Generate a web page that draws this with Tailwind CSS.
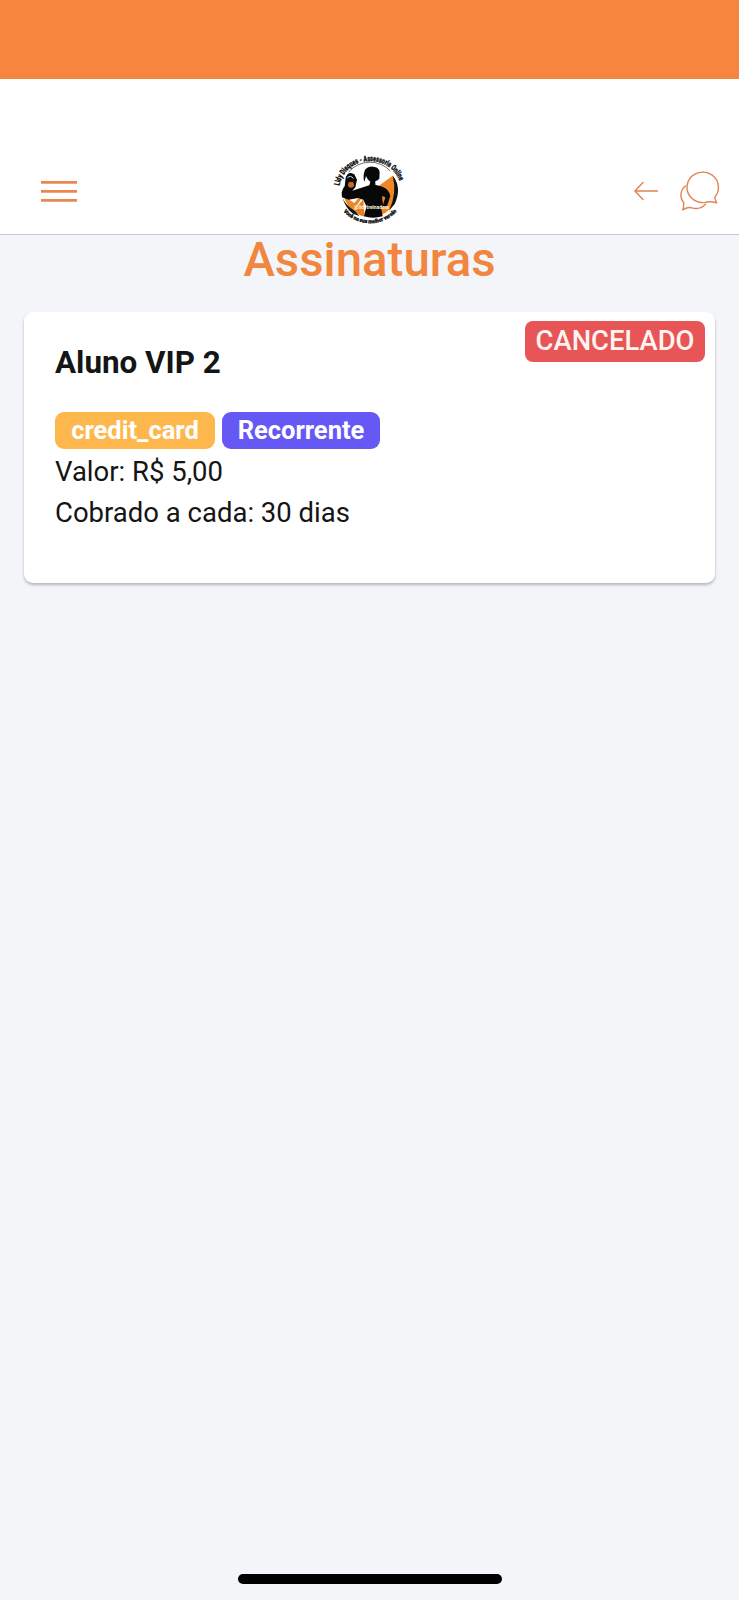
<!DOCTYPE html>
<html lang="pt-BR">
<head>
    <meta charset="UTF-8">
    <meta name="viewport" content="width=device-width, initial-scale=1.0">
    <title>Assinaturas</title>
    <script src="https://cdn.jsdelivr.net/npm/@tailwindcss/browser@4"></script>
</head>
<body class="bg-[#f4f5f9] min-h-screen flex flex-col font-['Roboto',sans-serif] text-[#141515]">
    <div class="h-[79px] bg-[#f8853e]"></div>

    <header class="h-[156px] pt-[66px] bg-white border-b border-[#c5c5ca] grid grid-cols-[1fr_100px_1fr]">
        <button class="h-[92px] pl-[41px] flex items-center" aria-label="Menu">
            <svg class="w-9 h-6" viewBox="0 0 36 24" fill="none" stroke="#ea8750" stroke-width="2.8">
                <path d="M0 3.4h36M0 12.4h36M0 21.3h36"/>
            </svg>
        </button>

        <!-- logo -->
        <svg class="w-[100px] h-[90px]" viewBox="0 0 300 270" font-family="Roboto, sans-serif">
            <defs>
                <path id="arco-topo" d="M59 122A92 85 0 0 1 241 120"/>
                <path id="arco-base" d="M69 198A108 108 0 0 0 233 196"/>
                <clipPath id="disco"><circle cx="151" cy="136" r="81"/></clipPath>
            </defs>
            <circle cx="151" cy="136" r="81" fill="#fff"/>
            <g clip-path="url(#disco)">
                <path d="M151 141L220 91L240 132L229 185L190 220H150Z" fill="#ec8828"/>
                <path d="M60 116L125 160L95 205L64 165Z" fill="#ec8828"/>
                <path d="M95 204L130 163L134 220H110Z" fill="#e77e24"/>
                <path d="M86 163L122 151L103 174Z" fill="#fff"/>
            </g>
            <path d="M86 81A84 84 0 0 1 211 78" fill="none" stroke="#222" stroke-width="2"/>
            <path d="M218 92Q247 127 224 177L207 197Q232 145 218 92Z" fill="#111"/>
            <path d="M68 160Q77 190 99 206L118 213L104 197Q80 185 68 160Z" fill="#111"/>
            <path d="M136 73Q147 61 163 66Q178 68 179 82L178 101Q172 108 166 108L166 119L187 125Q207 132 211 153L201 184L183 187L188 214Q158 222 132 214L139 184L130 164L114 159L86 164L66 157Q62 139 74 124L77 98Q82 83 93 84L103 88L111 104L106 127L97 137L122 129L148 121L151 110L143 103L138 93L133 111Q127 91 136 73Z" fill="#080808"/>
            <circle cx="93" cy="119" r="9" fill="#c96c29"/>
            <path d="M82 99Q92 88 100 101" fill="none" stroke="#ddd" stroke-width="3"/>
            <path d="M186 153L196 157L189 179Z" fill="#ec8828"/>
            <text x="103" y="191" font-size="15" font-weight="700" textLength="104" lengthAdjust="spacingAndGlyphs" fill="#fff5df">@lidytreinadora</text>
            <text font-size="24" font-weight="900" fill="#111" stroke="#111" stroke-width="1"><textPath href="#arco-topo" startOffset="0" textLength="240" lengthAdjust="spacingAndGlyphs">Lidy Dieques - Assessoria Online</textPath></text>
            <text font-size="16" font-weight="900" fill="#111" stroke="#111" stroke-width="1"><textPath href="#arco-base" startOffset="2" textLength="180" lengthAdjust="spacingAndGlyphs">Você na sua melhor versão</textPath></text>
        </svg>

        <div class="h-[92px] pr-[19px] flex items-center justify-end gap-[22px]">
            <svg class="w-6 h-5" viewBox="0 0 24 20" fill="none" stroke="#e28353" stroke-width="1.4" stroke-linecap="round" stroke-linejoin="round">
                <path d="M23.5 10H1M9 1.5L.9 10L9 18.5"/>
            </svg>
            <svg class="w-10 h-10 overflow-visible" viewBox="0 0 40 40" fill="none" stroke="#e28353" stroke-width="1.4" stroke-linecap="round" stroke-linejoin="round">
                <path d="M34.9 26A15.7 15.2 0 1 0 25.2 31.4C28 30.6 31 30.2 36.7 31.7C35.5 30 34.8 28.5 34.9 26Z"/>
                <path d="M5.6 15C.5 18.6-.8 26 3.7 31.8C3.9 34.6 3.6 37 2.7 38.9C5.6 37.2 8.6 35.9 11.7 36.8C17 38.3 22 37.2 25.6 33.1"/>
            </svg>
        </div>
    </header>

    <main class="flex-1">
        <h1 class="h-[77px] text-center text-[47.4px] leading-[50px] font-medium text-[#f0863f]">Assinaturas</h1>

        <div class="relative mx-6 h-[271px] px-[31px] pt-[30px] bg-white rounded-[9px] shadow-[0_2px_3px_rgba(0,0,0,0.26)]">
            <span class="absolute top-[9px] right-[10px] w-[180px] h-[41px] rounded-lg bg-[#e75557] text-[#fff4f0] text-[27.4px] leading-[41px] text-center font-medium">CANCELADO</span>
            <h2 class="text-[31.4px] leading-[41px] font-bold">Aluno VIP 2</h2>
            <div class="mt-[29px] flex gap-[7px] text-[25.5px] leading-[37px] font-bold text-white text-center">
                <span class="w-40 h-[37px] rounded-[9px] bg-[#feb74d]">credit_card</span>
                <span class="w-[158px] h-[37px] rounded-[9px] bg-[#6658f5]">Recorrente</span>
            </div>
            <div class="mt-[2px] text-[27.5px] leading-[41px]">
                <p>Valor: R$ 5,00</p>
                <p>Cobrado a cada: 30 dias</p>
            </div>
        </div>
    </main>

    <div class="mx-auto mb-4 w-[264px] h-[10px] rounded-full bg-black"></div>
</body>
</html>
